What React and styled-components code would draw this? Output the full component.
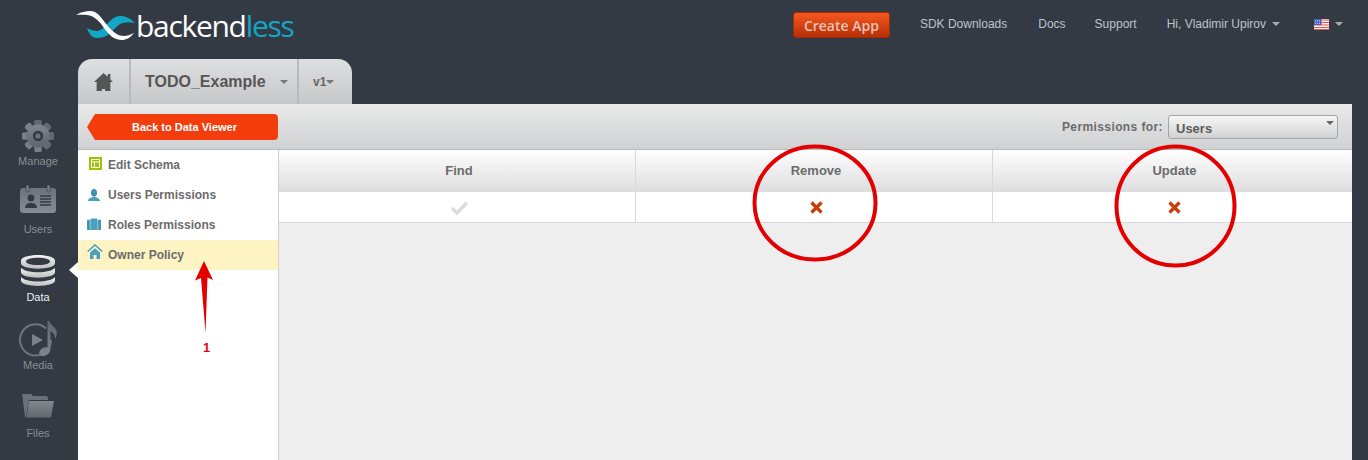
import styled, { createGlobalStyle } from "styled-components";

const GlobalStyle = createGlobalStyle`
  html, body { margin: 0; padding: 0; height: 100%; overflow: hidden; }
  body { background: #333a43; font-family: "Liberation Sans", Arial, sans-serif; }
`;

const Page = styled.div`
  position: relative;
  width: 1368px;
  height: 460px;
  overflow: hidden;
  background: #333a43;
  display: flex;
  flex-direction: column;
`;

const TopBar = styled.header`
  height: 59px;
  flex: none;
  display: flex;
  align-items: flex-start;
  padding: 10px 0 0 76px;
  box-sizing: border-box;
`;

const Logo = styled.div`
  display: flex;
  align-items: center;
  height: 31px;
`;

const LogoText = styled.span`
  font-family: "Open Sans", sans-serif;
  font-size: 30px;
  line-height: 31px;
  letter-spacing: -1.3px;
  color: #fff;
  font-weight: 500;
  b { font-weight: 500; color: #12a7c6; }
`;

const Nav = styled.nav`
  margin-left: auto;
  margin-top: 2px;
  display: flex;
  align-items: center;
  height: 26px;
  padding-right: 25px;
`;

const CreateButton = styled.button`
  width: 97px;
  height: 26px;
  margin-right: 30px;
  border: 1px solid #a32a06;
  border-radius: 3px;
  background: linear-gradient(#f8581f, #b62f06);
  color: #e6c4b6;
  font-family: "Open Sans", sans-serif;
  font-weight: 600;
  font-size: 14px;
  padding: 0;
`;

const NavLink = styled.a`
  color: #bfc3c8;
  font-size: 12px;
  margin-right: ${(p) => p.$gap}px;
  margin-bottom: 2px;
  display: flex;
  align-items: center;
  gap: 6px;
`;

const Caret = styled.i`
  display: block;
  width: 0;
  height: 0;
  border-left: 4px solid transparent;
  border-right: 4px solid transparent;
  border-top: 4px solid ${(p) => p.$color || "#a6abb1"};
`;

const Body = styled.div`
  flex: 1;
  display: flex;
  min-height: 0;
`;

const Rail = styled.aside`
  width: 78px;
  flex: none;
  display: flex;
  flex-direction: column;
  align-items: center;
  padding-top: 41px;
  box-sizing: border-box;
`;

const RailItem = styled.div`
  position: relative;
  width: 78px;
  height: 68px;
  display: flex;
  flex-direction: column;
  align-items: center;
  justify-content: flex-end;
  padding-right: 2px;
  box-sizing: border-box;
  color: ${(p) => (p.$active ? "#eceef0" : "#8a8e94")};
  font-size: 11px;
  line-height: 13px;
  gap: ${(p) => p.$gap}px;
  ${(p) =>
    p.$active &&
    `&::after {
      content: "";
      position: absolute;
      right: 0;
      top: 26px;
      border-top: 8.5px solid transparent;
      border-bottom: 8.5px solid transparent;
      border-right: 9px solid #fff;
    }`}
`;

const Main = styled.main`
  flex: 1;
  display: flex;
  flex-direction: column;
  min-width: 0;
  padding-right: 16px;
`;

const Tabs = styled.div`
  height: 45px;
  width: 274px;
  flex: none;
  display: flex;
  border-radius: 14px 14px 0 0;
  background: linear-gradient(#dedfe0, #c6c7c9);
  overflow: hidden;
`;

const Tab = styled.div`
  width: ${(p) => p.$width}px;
  flex: none;
  display: flex;
  align-items: center;
  justify-content: ${(p) => p.$justify || "center"};
  padding-left: ${(p) => p.$pad || 0}px;
  box-sizing: border-box;
  color: ${(p) => p.$color || "#555"};
  border-right: ${(p) => (p.$last ? "0" : "2px solid #b8b9bb")};
  font-weight: bold;
  font-size: ${(p) => p.$size || 16}px;
  gap: ${(p) => p.$gap || 0}px;
`;

const Panel = styled.section`
  flex: 1;
  display: flex;
  flex-direction: column;
  min-height: 0;
  background: #eee;
`;

const Toolbar = styled.div`
  height: 46px;
  flex: none;
  display: flex;
  align-items: center;
  justify-content: space-between;
  box-sizing: border-box;
  padding: 0 14px 0 9px;
  background: linear-gradient(#e9e9e9, #d0d1d3);
  border-bottom: 1px solid #b9babc;
`;

const BackButton = styled.button`
  position: relative;
  width: 183px;
  height: 26px;
  margin-left: 8px;
  border: 0;
  padding: 0 4px 0 0;
  border-radius: 0 4px 4px 0;
  background: #f33d0d;
  color: #fff;
  font-family: "Liberation Sans", sans-serif;
  font-weight: bold;
  font-size: 11px;
  &::before {
    content: "";
    position: absolute;
    left: -8px;
    top: 0;
    border-top: 13px solid transparent;
    border-bottom: 13px solid transparent;
    border-right: 8px solid #f33d0d;
  }
`;

const PermissionsFor = styled.div`
  display: flex;
  align-items: center;
  gap: 5px;
  color: #6b6b6b;
  font-size: 12px;
  font-weight: bold;
  letter-spacing: 0.4px;
`;

const Select = styled.div`
  position: relative;
  width: 170px;
  height: 24px;
  box-sizing: border-box;
  padding: 3px 0 0 7px;
  display: flex;
  align-items: center;
  border: 1px solid #a4a5a7;
  border-radius: 3px;
  background: linear-gradient(#f6f6f6, #d2d2d2);
  color: #5c5c5c;
  letter-spacing: 0;
  font-size: 13px;
  i {
    position: absolute;
    right: 3px;
    top: 5px;
  }
`;

const Content = styled.div`
  flex: 1;
  display: flex;
  min-height: 0;
`;

const Sidebar = styled.ul`
  width: 200px;
  flex: none;
  margin: 0;
  padding: 0;
  list-style: none;
  background: #fff;
  border-right: 1px solid #d0d0d0;
`;

const SideItem = styled.li`
  height: 30px;
  display: flex;
  align-items: center;
  box-sizing: border-box;
  padding-left: 30px;
  position: relative;
  background: ${(p) => (p.$active ? "#fdf3c3" : "transparent")};
  color: #6b6b6b;
  font-size: 12px;
  font-weight: bold;
  svg {
    position: absolute;
    left: ${(p) => p.$iconLeft}px;
    top: ${(p) => p.$iconTop}px;
  }
`;

const Table = styled.div`
  flex: 1;
  min-width: 0;
  display: grid;
  grid-template-columns: 357px 357px 1fr;
  grid-template-rows: 42px 31px;
  align-content: start;
`;

const HeadCell = styled.div`
  display: flex;
  align-items: center;
  justify-content: center;
  padding: 0 0 1px 4px;
  box-sizing: border-box;
  background: linear-gradient(#fefefe, #dddddd);
  color: #6b6b6b;
  font-size: 13px;
  font-weight: bold;
  border-right: ${(p) => (p.$last ? "0" : "1px solid #d8d8d8")};
`;

const Cell = styled.div`
  display: flex;
  align-items: center;
  justify-content: center;
  padding-left: ${(p) => p.$pad}px;
  box-sizing: border-box;
  background: #fff;
  border-bottom: 1px solid #d8d8d8;
  border-right: ${(p) => (p.$last ? "0" : "1px solid #d8d8d8")};
`;

const Notes = styled.svg`
  position: absolute;
  inset: 0;
  pointer-events: none;
`;

const NoteNumber = styled.span`
  position: absolute;
  left: 203px;
  top: 341px;
  color: #e30613;
  font-size: 13px;
  line-height: 14px;
  font-weight: bold;
`;

const railGrad = (id, a, b) => (
  <defs>
    <linearGradient id={id} x1="0" y1="0" x2="0" y2="1">
      <stop offset="0" stopColor={a} />
      <stop offset="1" stopColor={b} />
    </linearGradient>
  </defs>
);

const GearIcon = () => (
  <svg width="32" height="32" viewBox="0 0 32 32">
    {railGrad("gear", "#7d828a", "#62676f")}
    <g fill="url(#gear)">
      {[0, 45, 90, 135, 180, 225, 270, 315].map((a) => (
        <rect key={a} x="12.5" y="0" width="7" height="32" rx="1.5" transform={`rotate(${a} 16 16)`} />
      ))}
    </g>
    <circle cx="16" cy="16" r="8.5" fill="none" stroke="url(#gear)" strokeWidth="6" />
    <circle cx="16" cy="16" r="5.2" fill="#333a43" />
    <circle cx="16" cy="16" r="2.6" fill="#6d7179" />
  </svg>
);

const UsersIcon = () => (
  <svg width="36" height="28" viewBox="0 0 36 28">
    {railGrad("card", "#6d727b", "#888b92")}
    <rect x="0" y="3" width="36" height="25" rx="3" fill="url(#card)" />
    <rect x="6" y="0" width="3" height="7" rx="1" fill="#7a7e85" stroke="#333a43" strokeWidth=".6" />
    <rect x="27" y="0" width="3" height="7" rx="1" fill="#7a7e85" stroke="#333a43" strokeWidth=".6" />
    <circle cx="11" cy="13" r="3.4" fill="#333a43" />
    <path d="M5 23c0-4 3-5 6-5s6 1 6 5z" fill="#333a43" />
    <path d="M20 11h11M20 14h11M20 17h11M20 20h11" stroke="#333a43" strokeWidth="1.4" />
  </svg>
);

const DataIcon = () => (
  <svg width="34" height="31" viewBox="0 0 34 34" preserveAspectRatio="none">
    {railGrad("db", "#f4f4f4", "#bdbdbd")}
    <path d="M0 24v4c0 3.500 8 6 17 6s17-2.500 17-6v-4c-2 3-9 5-17 5s-15-2-17-5z" fill="url(#db)" />
    <path d="M0 14v5c0 3.500 8 6 17 6s17-2.500 17-6v-5c-2 3-9 5-17 5S2 17 0 14z" fill="url(#db)" />
    <path fillRule="evenodd" d="M17 0C8 0 0 2.500 0 6v3c0 3.500 8 6 17 6s17-2.500 17-6V6c0-3.500-8-6-17-6zm0 3c6 0 12 1.500 12 4s-6 4-12 4S5 9.500 5 7s6-4 12-4z" fill="url(#db)" />
  </svg>
);

const MediaIcon = () => (
  <svg width="38" height="36" viewBox="-1 0 38 36">
    {railGrad("media", "#62676f", "#80858c")}
    <path d="M26 6.500A15.500 15.500 0 1 0 31 18" fill="none" stroke="#6f747c" strokeWidth="2" transform="translate(0 1)" />
    <path d="M12 13l11 6-11 6z" fill="#7d828a" />
    <path d="M27.500 0h2c.5 4 6 6 7 10 .7 3-.2 6-1.500 8 .3-3-.5-6-4.500-8v18c0 4-4 7-7.500 7-3 0-4.500-2-3.500-4.500 1-3 5-5 8-4z" fill="url(#media)" />
  </svg>
);

const FilesIcon = () => (
  <svg width="32" height="24" viewBox="0 0 32 24">
    {railGrad("folder", "#82868d", "#62676f")}
    <path d="M0 0h9l2 2h14l1 2v2H7L4 23H3z" fill="#6b7078" />
    <path d="M7 7h25l-3 16.500H4.500z" fill="url(#folder)" />
  </svg>
);

const HomeGlyph = ({ color, size }) => (
  <svg width={size} height={size} viewBox="0 0 18 18">
    <path d="M9 1L0 9.500h2.500V18h5v-2h3v2h5V9.500H18l-2.500-2.500V2h-2.500v2.500z" fill={color} />
  </svg>
);

const OwnerIcon = () => (
  <svg width="16" height="15" viewBox="0 0 16 15">
    <path d="M.7 7.500L8 1l7.300 6.500" fill="none" stroke="#4ba0bd" strokeWidth="1.600" />
    <path d="M8 4.200l5 4.400V15H9.500v-4h-3v4H3V8.600z" fill="#4ba0bd" />
  </svg>
);

const SchemaIcon = () => (
  <svg width="13" height="13" viewBox="0 0 13 13">
    <rect width="13" height="13" fill="#9cc400" />
    <path d="M2.500 2.500h8v8h-8zM2.500 5h8M5.500 5v5.500" fill="none" stroke="#fff" />
  </svg>
);

const UserIcon = () => (
  <svg width="12" height="12" viewBox="0 0 14 14">
    <ellipse cx="7" cy="4.500" rx="3.500" ry="4.500" fill="#3d93b2" />
    <path d="M0 14c0-3 3-4 7-5 4 1 7 2 7 5z" fill="#4ba0bd" />
  </svg>
);

const CaseIcon = () => (
  <svg width="14" height="12" viewBox="0 0 15 13">
    <path d="M0 2h3v11H0zM12 2h3v11h-3z" fill="#3d93b2" />
    <path d="M4 2V.500h7V2h.500v11h-8V2z" fill="#4ba0bd" />
  </svg>
);

const FlagIcon = () => (
  <svg width="15" height="11" viewBox="0 0 15 11">
    <rect width="15" height="11" fill="#f7f7f7" />
    <path d="M0 1h15M0 3.500h15M0 6h15M0 8.500h15M0 10.500h15" stroke="#e8534f" strokeWidth="1.200" />
    <rect width="7.500" height="6" fill="#3f5fb8" />
    <path d="M1 1.500h6M1 3h6M1 4.500h6" stroke="#dfe6f7" strokeWidth=".7" strokeDasharray="1 1" />
  </svg>
);

const CheckMark = () => (
  <svg width="19" height="15" viewBox="0 0 19 15">
    <path d="M2 8l5 5L17 2.500" fill="none" stroke="#dcdcdc" strokeWidth="3.600" />
  </svg>
);

const CrossMark = () => (
  <svg width="13" height="13" viewBox="0 0 13 13">
    <path d="M1.500 1.500l10 10M11.500 1.500l-10 10" fill="none" stroke="#cc3d05" strokeWidth="3.200" />
  </svg>
);

const LogoMark = () => (
  <svg width="60" height="31" viewBox="0 0 60 31">
    <path d="M11 18C14 20 18 21 21 21C26 21 30 15 34 11C38 7 41 6 45 6C50 6 55 9 59 13C55 12 51 12 47 13C42 14 38 20 33 24C29 27 25 28 21 28C16 28 13 24 11 18z" fill="#12a7c6" />
    <path d="M0 5C5 2 10 1 14 1C22 1 26 9 31 15C36 21 41 26 48 26C51 26 54 25 58 23C54 28 50 30 46 30C38 30 33 25 28 18C24 12 19 6 11 5C8 4.500 4 4.500 0 5z" fill="#fff" />
  </svg>
);

export default function App() {
  const sideItems = [
    { label: "Edit Schema", icon: <SchemaIcon />, left: 11, top: 7 },
    { label: "Users Permissions", icon: <UserIcon />, left: 10, top: 9 },
    { label: "Roles Permissions", icon: <CaseIcon />, left: 9, top: 8 },
    { label: "Owner Policy", icon: <OwnerIcon />, left: 9, top: 4, active: true },
  ];

  return (
    <Page>
      <GlobalStyle />
      <TopBar>
        <Logo>
          <LogoMark />
          <LogoText>
            backend<b>less</b>
          </LogoText>
        </Logo>
        <Nav>
          <CreateButton>Create App</CreateButton>
          <NavLink $gap={31}>SDK Downloads</NavLink>
          <NavLink $gap={29}>Docs</NavLink>
          <NavLink $gap={30}>Support</NavLink>
          <NavLink $gap={34}>
            Hi, Vladimir Upirov <Caret />
          </NavLink>
          <NavLink $gap={0}>
            <FlagIcon /> <Caret />
          </NavLink>
        </Nav>
      </TopBar>
      <Body>
        <Rail>
          <RailItem $gap={3}>
            <GearIcon />
            Manage
          </RailItem>
          <RailItem $gap={10}>
            <UsersIcon />
            Users
          </RailItem>
          <RailItem $active $gap={5}>
            <DataIcon />
            Data
          </RailItem>
          <RailItem $gap={2}>
            <MediaIcon />
            Media
          </RailItem>
          <RailItem $gap={9}>
            <FilesIcon />
            Files
          </RailItem>
        </Rail>
        <Main>
          <Tabs>
            <Tab $width={53}>
              <HomeGlyph color="#555" size={19} />
            </Tab>
            <Tab $width={168} $justify="flex-start" $pad={14} $gap={14}>
              TODO_Example <Caret $color="#777" />
            </Tab>
            <Tab $width={53} $last $size={12} $color="#666" $justify="flex-start" $pad={14}>
              v1
              <Caret $color="#777" />
            </Tab>
          </Tabs>
          <Panel>
            <Toolbar>
              <BackButton>Back to Data Viewer</BackButton>
              <PermissionsFor>
                Permissions for:
                <Select>
                  Users
                  <Caret $color="#666" />
                </Select>
              </PermissionsFor>
            </Toolbar>
            <Content>
              <Sidebar>
                {sideItems.map((item) => (
                  <SideItem key={item.label} $active={item.active} $iconLeft={item.left} $iconTop={item.top}>
                    {item.icon}
                    {item.label}
                  </SideItem>
                ))}
              </Sidebar>
              <Table>
                <HeadCell>Find</HeadCell>
                <HeadCell>Remove</HeadCell>
                <HeadCell $last>Update</HeadCell>
                <Cell $pad={5}>
                  <CheckMark />
                </Cell>
                <Cell $pad={5}>
                  <CrossMark />
                </Cell>
                <Cell $last $pad={3}>
                  <CrossMark />
                </Cell>
              </Table>
            </Content>
          </Panel>
        </Main>
      </Body>
      <Notes width="1368" height="460" viewBox="0 0 1368 460">
        <ellipse cx="815" cy="203" rx="60.500" ry="56.500" fill="none" stroke="#e30000" strokeWidth="4" />
        <ellipse cx="1175.500" cy="206" rx="59" ry="59.500" fill="none" stroke="#e30000" strokeWidth="4" />
        <path d="M204 261l9 19-5.500-2.500L205.500 333 201 278l-6 2.500z" fill="#e30000" />
      </Notes>
      <NoteNumber>1</NoteNumber>
    </Page>
  );
}
